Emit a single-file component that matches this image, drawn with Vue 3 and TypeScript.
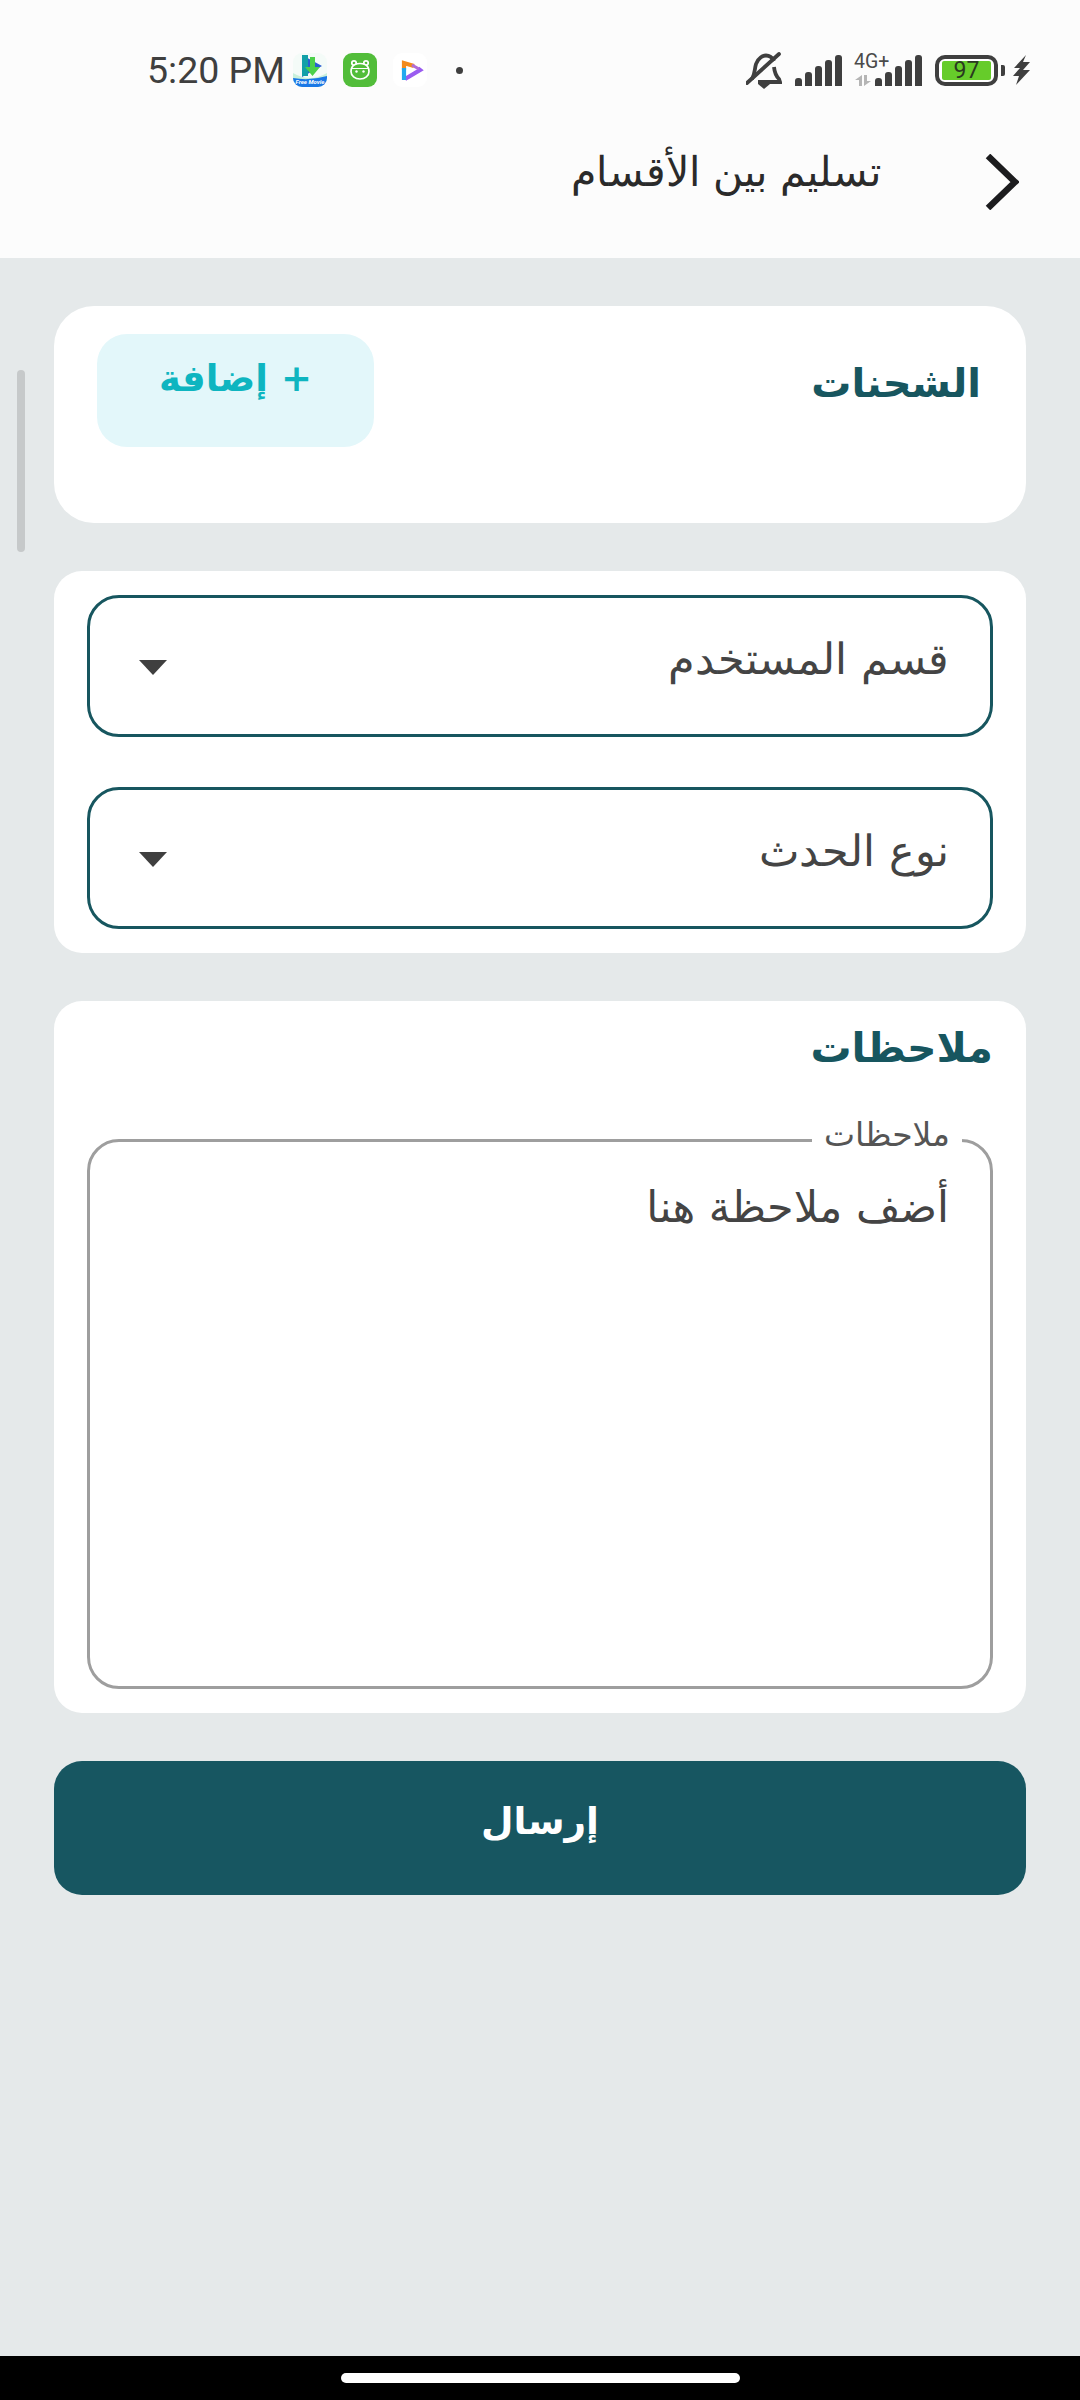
<script setup lang="ts">
const bars: number[] = [8, 14, 20, 26, 31];
const selects: string[] = ['قسم المستخدم', 'نوع الحدث'];
</script>

<template>
  <div class="screen" dir="rtl">
    <header class="top">
      <div class="status" dir="ltr">
        <span class="time">5:20 PM</span>
        <div class="app-icons">
          <div class="app app-movie">
            <svg viewBox="0 0 34 34" width="34" height="34">
              <path d="M0 20 Q17 30 34 20 V34 H0 Z" fill="#c8f0dc" />
              <path d="M9 2 L29 13 L9 24 Z" fill="#2a5fd0" />
              <rect x="9" y="2" width="6" height="21" fill="#12a0a8" />
              <path d="M17 4v10h-5l7.500 9 7.500-9h-5V4z" fill="#4cd04a" />
              <path d="M0 25 Q17 28 34 23 V28 a6 6 0 0 1-6 6 H6 a6 6 0 0 1-6-6z" fill="#1a78e6" />
            </svg>
            <span class="movie-text">Free Movie</span>
          </div>
          <div class="app app-android">
            <svg viewBox="0 0 34 34" width="34" height="34" fill="none" stroke="#fff" stroke-width="1.7">
              <circle cx="11" cy="10" r="2.200" />
              <circle cx="23" cy="10" r="2.200" />
              <path d="M12 11.500 Q17 9.500 22 11.500 C25 13 26 16 26 18.500 C26 23 22 26 17 26 C12 26 8 23 8 18.500 C8 16 9 13 12 11.500 Z" fill="#52bd3a" />
              <path d="M8.500 15.500 H25.500" stroke-width="1.200" />
              <circle cx="13.500" cy="18.500" r="1.200" fill="#fff" stroke="none" />
              <circle cx="20.500" cy="18.500" r="1.200" fill="#fff" stroke="none" />
            </svg>
          </div>
          <div class="app app-play">
            <svg viewBox="0 0 34 34" width="34" height="34" fill="none" stroke-width="4.200">
              <path d="M11 17 V10 L21 13" stroke="#f28a1c" />
              <path d="M25 15.500 L27 17 L12 26" stroke="#9a5cf0" />
              <path d="M11 15 V27" stroke="#22a8ee" />
              <path d="M19 12 L26 16" stroke="#b06cd8" stroke-width="3" />
            </svg>
          </div>
          <span class="dot"></span>
        </div>
        <div class="sys-icons">
          <svg class="bell" viewBox="0 0 36 37" width="36" height="37" fill="none" stroke="#3f3f3f" stroke-width="3.800">
            <path d="M6 27 C9 22 8.500 17 10 12 C12 6 17 3.500 20 3.500 C23.500 3.500 26 5 28 9" />
            <path d="M28 15 C28.500 20 30 24 33 27 L34 30 H12" />
            <path d="M1 31 L33 2" stroke-linecap="round" />
            <path d="M12 32 H24 L18 37 Z" fill="#3f3f3f" stroke="none" />
          </svg>
          <div class="signal">
            <span v-for="h in bars" :key="h" class="bar" :style="{ height: h + 'px' }"></span>
          </div>
          <div class="net">
            <span class="net-label">4G+</span>
            <svg class="net-arrows" viewBox="0 0 16 11" width="16" height="11" fill="#b5b5b5">
              <path d="M0 5 L7 0 V11 H4 V5 Z M9 0 H12 V6 H16 L9 11 Z" />
            </svg>
          </div>
          <div class="signal signal-two">
            <span v-for="h in bars" :key="h" class="bar" :style="{ height: h + 'px' }"></span>
          </div>
          <div class="battery">
            <div class="cell"><span>97</span></div>
          </div>
          <span class="nub"></span>
          <svg class="bolt" viewBox="0 0 18 30" width="18" height="30" fill="#3f3f3f">
            <path d="M13 0 L1 13 H7 L0 21 H6 L3 30 L17 15 H10 L17 7 H10 Z" />
          </svg>
        </div>
      </div>
      <div class="titlebar">
        <svg class="chevron" viewBox="0 0 34 56" width="34" height="56" fill="none" stroke="#1c1c1e" stroke-width="6.500">
          <path d="M3 2 L30 28 L3 54" />
        </svg>
        <h1 class="page-title">تسليم بين الأقسام</h1>
      </div>
    </header>

    <main class="content">
      <span class="scrollbar"></span>

      <section class="card card-shipments">
        <h2 class="ship-title">الشحنات</h2>
        <button class="add">+ إضافة</button>
      </section>

      <section class="card card-selects">
        <div v-for="s in selects" :key="s" class="select">
          <span class="select-text">{{ s }}</span>
          <span class="caret"></span>
        </div>
      </section>

      <section class="card card-notes">
        <h2 class="notes-title">ملاحظات</h2>
        <div class="outline">
          <span class="legend">ملاحظات</span>
          <span class="placeholder">أضف ملاحظة هنا</span>
        </div>
      </section>

      <button class="send">إرسال</button>
    </main>

    <footer class="navbar"><span class="pill"></span></footer>
  </div>
</template>

<style>
html, body { margin: 0; padding: 0; }
</style>

<style scoped>
* { box-sizing: border-box; }
.screen {
  width: 1080px;
  height: 2400px;
  display: flex;
  flex-direction: column;
  background: #e5e9ea;
  font-family: "DejaVu Sans", sans-serif;
  overflow: hidden;
}
.top { height: 258px; background: #fcfcfc; flex: none; }
.status {
  height: 124px;
  padding: 50px 49px 0 147px;
  display: flex;
  align-items: flex-start;
  justify-content: space-between;
}
.time {
  font-family: Roboto, sans-serif;
  font-size: 37.500px;
  line-height: 40px;
  color: #3f3f3f;
  width: 146px;
  white-space: nowrap;
}
.app-icons { display: flex; align-items: center; gap: 16px; margin-top: 3px; flex: 1; }
.app { width: 34px; height: 34px; border-radius: 9px; position: relative; overflow: hidden; }
.app-movie { background: #f4fbf8; }
.movie-text {
  position: absolute;
  left: 0; right: 0; bottom: 1px;
  font-family: Roboto, sans-serif;
  font-size: 6px;
  font-weight: 700;
  font-style: italic;
  line-height: 8px;
  color: #fff;
  text-align: center;
  white-space: nowrap;
}
.app-android { background: #52bd3a; }
.app-play { background: #fff; }
.dot { width: 7px; height: 7px; border-radius: 50%; background: #3f3f3f; margin-left: 13px; }
.sys-icons { display: flex; align-items: flex-start; }
.bell { margin-top: 2px; }
.signal { display: flex; align-items: flex-end; gap: 3px; height: 31px; margin: 5px 0 0 13px; }
.bar { width: 7px; background: #3f3f3f; border-radius: 3px 3px 0 0; }
.net { width: 40px; margin-left: 12px; position: relative; height: 36px; }
.net-label {
  position: absolute;
  left: 0; top: 2px;
  font-family: Roboto, sans-serif;
  font-size: 19.500px;
  line-height: 20px;
  color: #4a4a4a;
}
.net-arrows { position: absolute; left: 1px; top: 25px; }
.signal-two { margin-left: -19px; }
.battery {
  width: 63px;
  height: 31px;
  margin: 5px 0 0 13px;
  border: 4px solid #3f3f3f;
  border-radius: 10px;
  padding: 2px 3px;
  background: #fff;
}
.cell {
  width: 100%;
  height: 100%;
  background: #66cc2a;
  border-radius: 2px;
  display: flex;
  align-items: center;
  justify-content: center;
  font-family: Roboto, sans-serif;
  font-size: 23px;
  color: #2a3a20;
}
.nub { width: 4px; height: 11px; background: #3f3f3f; margin: 15px 0 0 3px; border-radius: 0 2px 2px 0; }
.bolt { margin: 5px 0 0 8px; }

.titlebar {
  height: 90px;
  display: flex;
  align-items: flex-start;
  padding-right: 61px;
}
.chevron { margin-top: 30px; }
.page-title {
  margin: 20px 104px 0 0;
  font-size: 41px;
  line-height: 56px;
  font-weight: 300;
  color: #2a2a2a;
  white-space: nowrap;
}

.content {
  flex: 1;
  position: relative;
  padding: 48px 54px 0;
  display: flex;
  flex-direction: column;
  gap: 48px;
}
.scrollbar {
  position: absolute;
  left: 17px;
  top: 112px;
  width: 8px;
  height: 182px;
  background: #c6c9ca;
  border-radius: 4px;
}
.card { background: #fff; border-radius: 28px; }
.card-shipments {
  height: 217px;
  border-radius: 40px;
  padding: 28px 45px 0 43px;
  display: flex;
  justify-content: space-between;
  align-items: flex-start;
}
.ship-title {
  margin: 21px 0 0;
  font-size: 40px;
  line-height: 56px;
  font-weight: 700;
  color: #17565f;
}
.add {
  width: 277px;
  height: 113px;
  border: none;
  border-radius: 30px;
  background: #e3f7fa;
  color: #0eb5c0;
  font: inherit;
  font-size: 37px;
  font-weight: 700;
  line-height: 50px;
  padding: 0 0 23px;
}
.card-selects {
  padding: 24px 33px 24px;
  display: flex;
  flex-direction: column;
  gap: 50px;
}
.select {
  height: 142px;
  border: 3px solid #17565f;
  border-radius: 32px;
  padding: 0 41px 0 49px;
  display: flex;
  align-items: center;
  justify-content: space-between;
}
.select-text {
  font-size: 43px;
  line-height: 56px;
  color: #444;
  font-weight: 300;
  margin-bottom: 14px;
}
.caret {
  width: 0;
  height: 0;
  border-left: 14px solid transparent;
  border-right: 14px solid transparent;
  border-top: 15px solid #3f3f3f;
  margin-top: 2px;
}
.card-notes {
  height: 712px;
  padding: 18px 33px 24px 33px;
  display: flex;
  flex-direction: column;
}
.notes-title {
  margin: 0;
  font-size: 41px;
  line-height: 58px;
  font-weight: 700;
  color: #17565f;
}
.outline {
  margin: 62px 0 0 0;
  flex: 1;
  position: relative;
  border: 3px solid #9e9e9e;
  border-radius: 32px;
  padding: 37px 41px 0;
}
.legend {
  position: absolute;
  top: -30px;
  right: 28px;
  padding: 0 12px;
  background: #fff;
  font-size: 33px;
  line-height: 46px;
  color: #555;
}
.placeholder {
  display: block;
  font-size: 43px;
  line-height: 56px;
  color: #444;
}
.send {
  height: 134px;
  border: none;
  border-radius: 28px;
  background: #175661;
  color: #fff;
  font: inherit;
  font-size: 37.500px;
  font-weight: 700;
  padding: 0 0 14px;
}
.navbar {
  height: 44px;
  flex: none;
  background: #000;
  display: flex;
  justify-content: center;
  padding-top: 17px;
}
.pill { width: 399px; height: 10px; background: #fff; border-radius: 5px; }
</style>
